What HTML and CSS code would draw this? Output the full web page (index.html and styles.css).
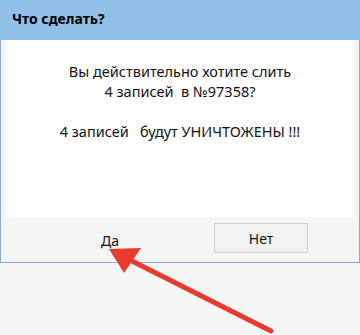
FILE: index.html
```html
<!DOCTYPE html>
<html lang="ru">
<head>
  <meta charset="UTF-8" />
  <title>Что сделать?</title>
  <link rel="stylesheet" href="styles.css">
</head>
<body>
  <div class="dialog">
    <div class="title-bar">Что сделать?</div>
    <div class="frame">
      <div class="message">
        <p>Вы действительно хотите слить<br>4 записей&nbsp; в №97358?</p>
        <p>4 записей &nbsp; будут УНИЧТОЖЕНЫ !!!</p>
      </div>
      <div class="buttons">
        <button class="btn btn-default">Да</button>
        <button class="btn">Нет</button>
      </div>
    </div>
  </div>

  <svg class="arrow" width="360" height="335" viewBox="0 0 360 335">
    <line x1="271" y1="331" x2="124" y2="257" stroke="#e63b2e" stroke-width="5" stroke-linecap="round" />
    <polygon points="109,249 141,248 124,273" fill="#e63b2e" />
  </svg>
</body>
</html>
```

FILE: styles.css
```css
body {
  margin: 0;
  background: #f5f5f5;
  font-family: "Noto Sans", "Open Sans", sans-serif;
  font-size: 14px;
  color: #111;
}

.dialog {
  width: 360px;
  box-sizing: border-box;
  border: 1px solid #8ea9d6;
  border-top: none;
}

.title-bar {
  height: 40px;
  margin: 0 -1px;
  padding-left: 12px;
  background: #91c1e9;
  font-weight: bold;
  font-size: 14px;
  line-height: 38px;
  color: #000;
}

.frame {
  padding: 0 5px;
  background: #f5f5f5;
}

.message {
  height: 177px;
  box-sizing: border-box;
  padding-top: 21px;
  background: #fff;
  text-align: center;
  font-size: 14.5px;
  line-height: 20px;
}

.message p {
  margin: 0 0 20px;
}

.buttons {
  display: flex;
  height: 45px;
  box-sizing: border-box;
  padding: 6px 0 0 57px;
  gap: 57px;
}

.btn {
  width: 94px;
  height: 30px;
  border: 1px solid #cccccc;
  background: #f0f0f0;
  font-family: inherit;
  font-size: 14px;
  color: #111;
  padding: 0;
}

.btn-default {
  border-color: transparent;
  background: transparent;
  padding-top: 4px;
}

.arrow {
  position: absolute;
  left: 0;
  top: 0;
}
```
